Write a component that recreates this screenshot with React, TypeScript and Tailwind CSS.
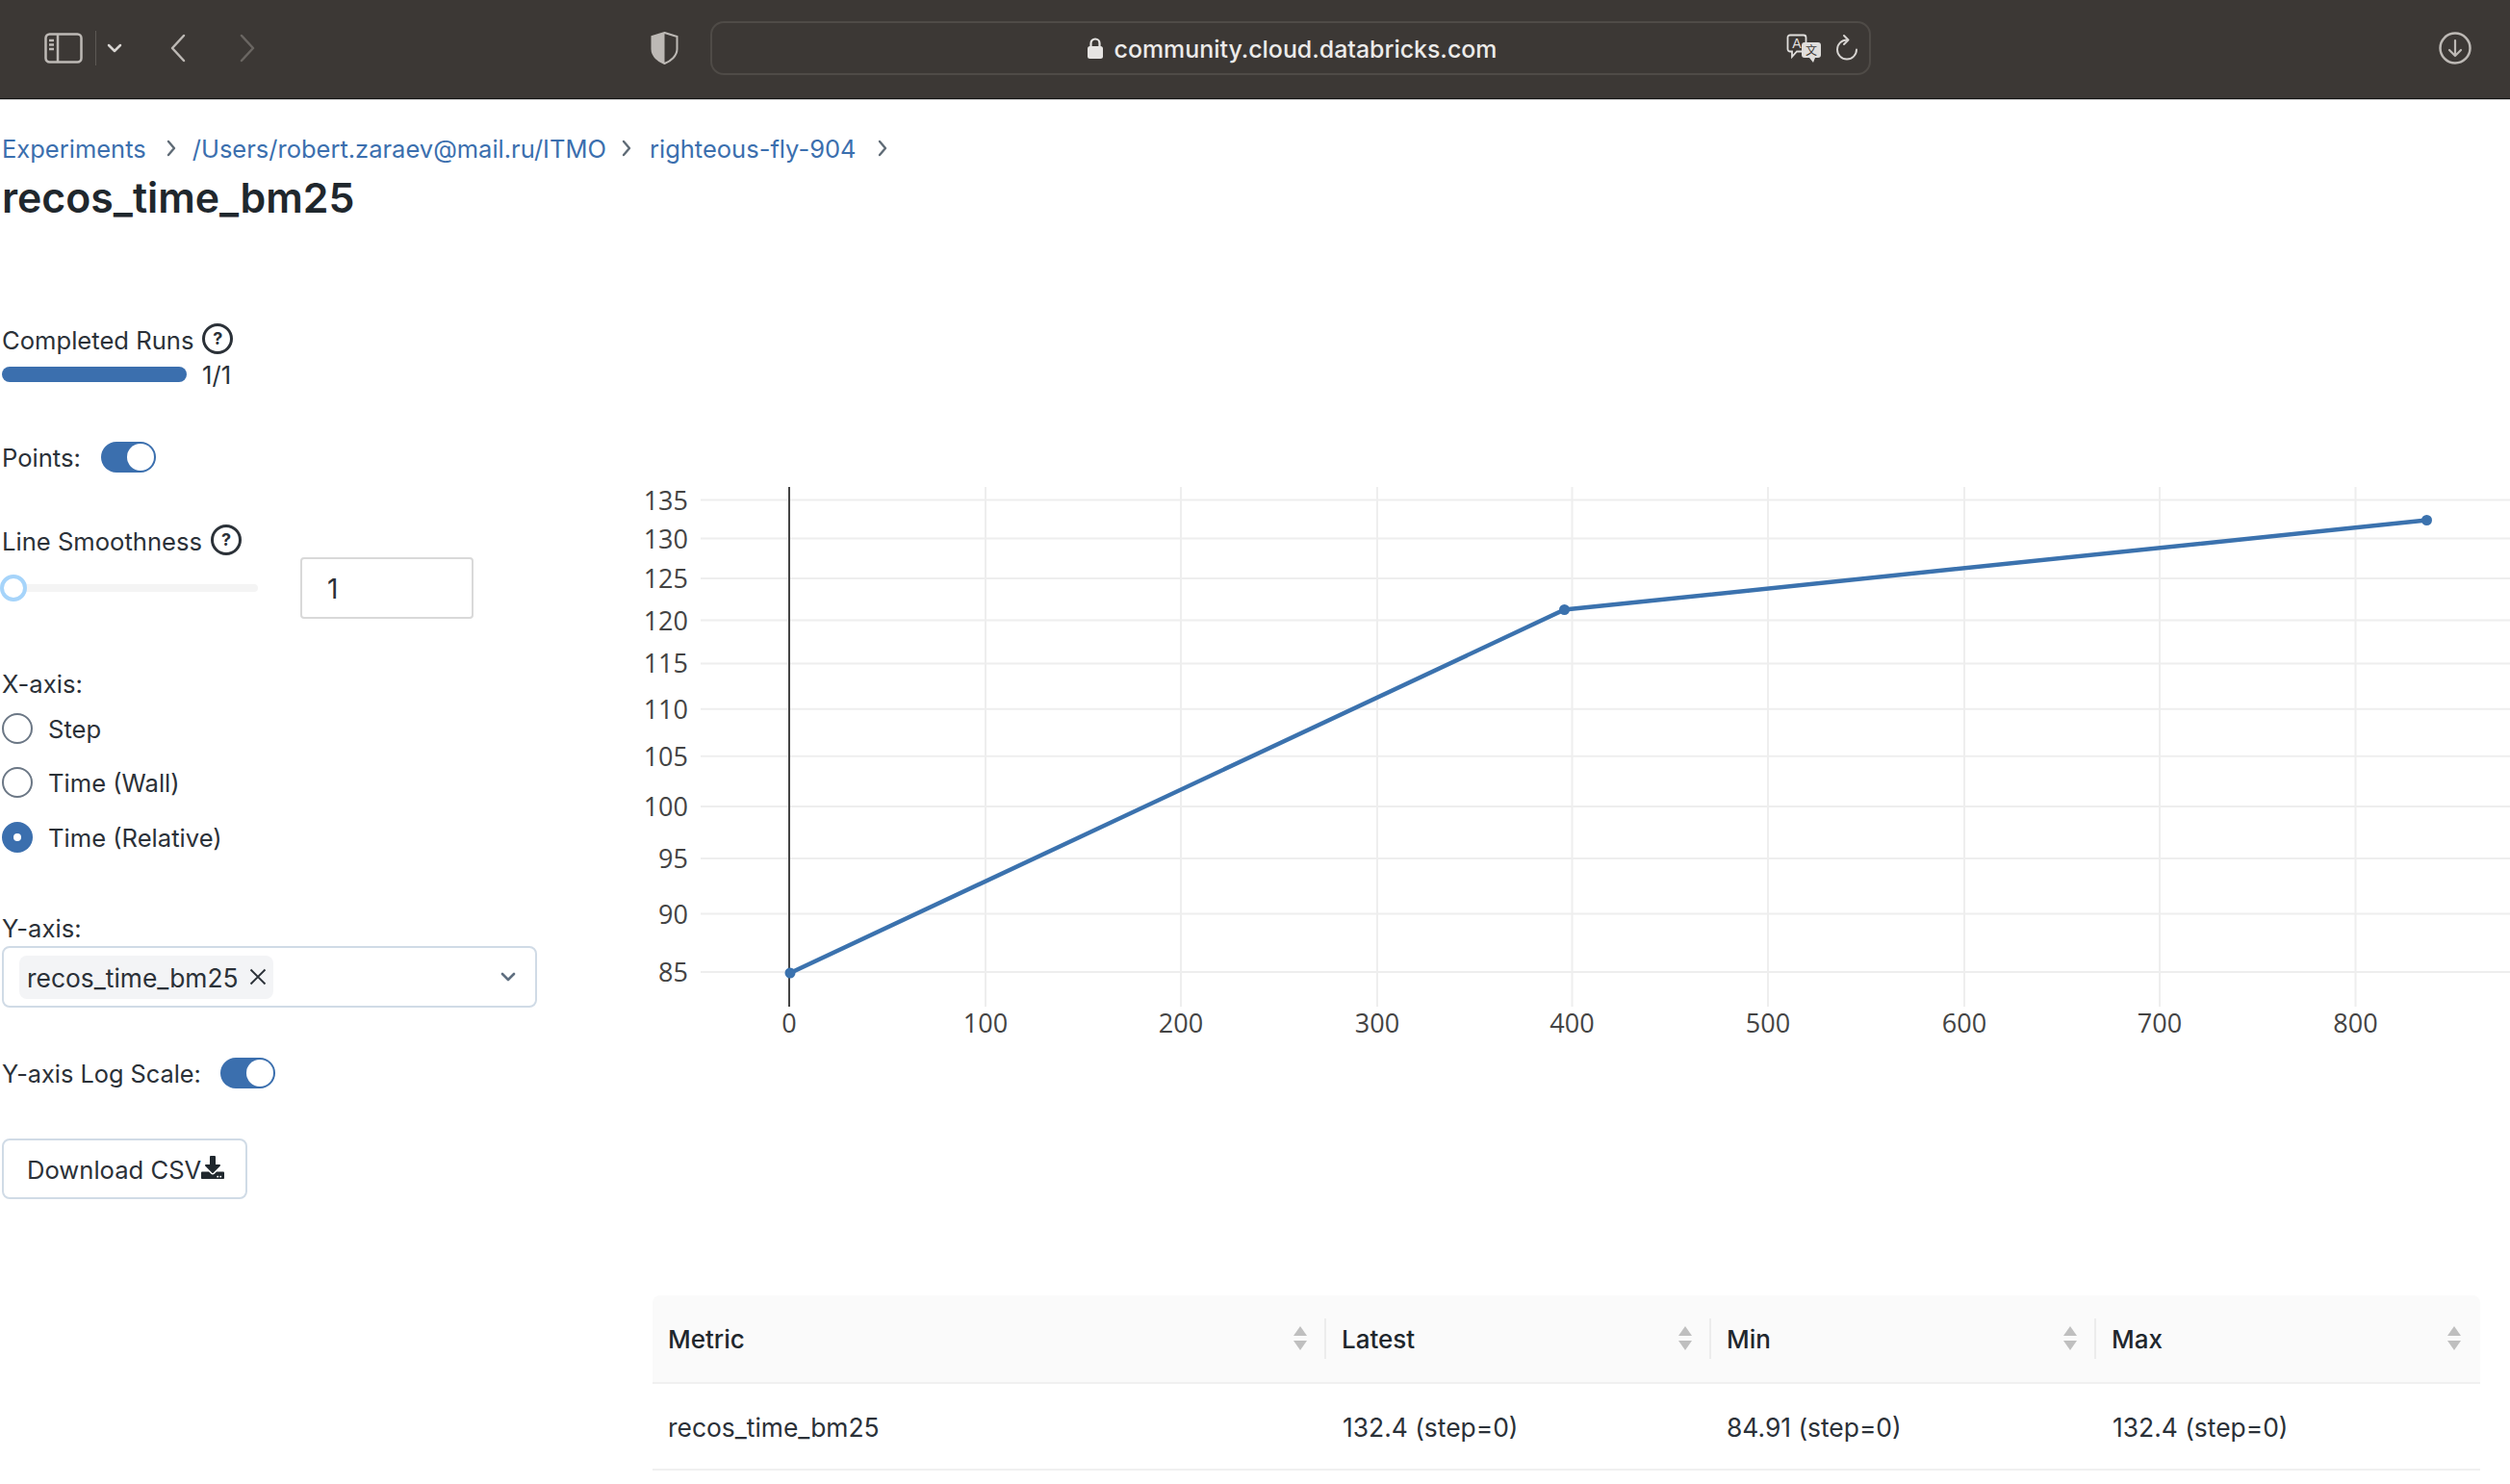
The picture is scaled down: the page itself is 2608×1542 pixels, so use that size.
import React from "react";
import { FaDownload } from "react-icons/fa";

const font = { fontFamily: "Inter, 'Liberation Sans', sans-serif" };
const yTicks: [string, number][] = [["135",519.5],["130",559.6],["125",601],["120",644.6],["115",689.4],["110",736.8],["105",785.8],["100",837.9],["95",892],["90",949.6],["85",1010]];
const xTicks: [string, number][] = [["100",1024],["200",1227],["300",1431],["400",1633.5],["500",1837],["600",2041],["700",2244],["800",2447.5]];
const tickFont = "'Open Sans', sans-serif";

function T({ children, className = "" }: { children: React.ReactNode; className?: string }) {
  return <span className={"pt-[2px] " + className}>{children}</span>;
}
function Help() {
  return <span className="ml-[9px] mt-[-3px] flex h-[32px] w-[32px] items-center justify-center rounded-full border-[3px] border-[#2b3138] text-[18px] font-bold leading-none text-[#2b3138]">?</span>;
}
function Switch() {
  return (
    <span className="flex h-[32px] w-[57px] items-center justify-end rounded-full bg-[#3b6fae] pr-[2px]">
      <span className="h-[28px] w-[28px] rounded-full bg-white" />
    </span>
  );
}
function Radio({ on, label, className }: { on?: boolean; label: string; className: string }) {
  return (
    <div className={"flex h-[32px] items-center " + className}>
      {on ? (
        <span className="flex h-[32px] w-[32px] items-center justify-center rounded-full bg-[#3b6fae]"><span className="h-[8px] w-[8px] rounded-full bg-white" /></span>
      ) : (
        <span className="h-[32px] w-[32px] rounded-full border-2 border-[#6b7785] bg-white" />
      )}
      <T className="ml-[16px]">{label}</T>
    </div>
  );
}
function Sort() {
  return (
    <svg width="16" height="26" viewBox="0 0 16 26" className="shrink-0">
      <path d="M8 0 L15 10 H1 Z" fill="#bfbfbf" />
      <path d="M1 15 H15 L8 25 Z" fill="#bfbfbf" />
    </svg>
  );
}
function HeadCell({ label, className, last }: { label: string; className: string; last?: boolean }) {
  return (
    <div className={"relative flex h-full items-center justify-between pl-[16px] pr-[19px] font-medium " + className}>
      <T>{label}</T>
      <Sort />
      {!last && <span className="absolute right-0 top-[24px] h-[42px] w-[2px] bg-[#ececec]" />}
    </div>
  );
}
function Chevron({ className }: { className: string }) {
  return (
    <svg width="10" height="18" viewBox="0 0 10 18" className={className} fill="none" stroke="#5f6b76" strokeWidth="2.4" strokeLinecap="round" strokeLinejoin="round">
      <path d="M2 2L8 9L2 16" />
    </svg>
  );
}

export default function App() {
  return (
    <div className="min-h-[1542px] w-[2608px] overflow-hidden bg-white text-[25.6px] leading-[32px] text-[#2b3138]" style={font}>
      <div className="flex h-[104px] items-center border-b-[1px] border-[#c9c9c9] bg-[#3c3835] pb-[4px] shadow-[inset_0_-1px_0_#111]">
        <svg width="40" height="32" viewBox="0 0 40 32" className="ml-[46px]" fill="none" stroke="#bdb9b5" strokeWidth="2.5">
          <rect x="1.5" y="1.5" width="37" height="29" rx="4" />
          <path d="M14 2V30" />
          <path d="M5 8H10M5 12.5H10M5 17H10" />
        </svg>
        <span className="ml-[13px] h-[36px] w-[1px] bg-[#5c5854]" />
        <svg width="16" height="12" viewBox="0 0 16 12" className="ml-[11px]" fill="none" stroke="#d8d5d2" strokeWidth="2.5" strokeLinecap="round" strokeLinejoin="round">
          <path d="M2 3L8 9L14 3" />
        </svg>
        <svg width="18" height="30" viewBox="0 0 18 30" className="ml-[49px]" fill="none" stroke="#bdb9b5" strokeWidth="2.5" strokeLinecap="round" strokeLinejoin="round">
          <path d="M15 2L3 15L15 28" />
        </svg>
        <svg width="18" height="30" viewBox="0 0 18 30" className="ml-[54px]" fill="none" stroke="#6a6662" strokeWidth="2.5" strokeLinecap="round" strokeLinejoin="round">
          <path d="M3 2L15 15L3 28" />
        </svg>
        <svg width="29" height="34" viewBox="0 0 29 34" className="ml-[410px]">
          <path d="M14.5 1 L27.5 5 V18 C27.5 25 21 30.5 14.5 33 C8 30.5 1.5 25 1.5 18 V5 Z" fill="none" stroke="#bdb9b5" strokeWidth="2" />
          <path d="M14.5 1 L1.5 5 V18 C1.5 25 8 30.5 14.5 33 Z" fill="#bdb9b5" />
        </svg>
        <div className="relative ml-[33px] flex h-[56px] w-[1206px] items-center justify-center rounded-[14px] border-2 border-[#4f4b47] pl-[2px]">
          <svg width="18" height="24" viewBox="0 0 18 24" className="mr-[11px]">
            <path d="M4.5 11V7a4.5 4.5 0 0 1 9 0v4" fill="none" stroke="#e6e4e2" strokeWidth="2.2" />
            <rect x="1" y="10" width="16" height="13" rx="2.5" fill="#e6e4e2" />
          </svg>
          <span className="pt-[2px] text-[24.9px] font-medium text-[#ecebea]">community.cloud.databricks.com</span>
          <svg width="38" height="30" viewBox="0 0 38 30" className="absolute right-[48px] top-[11px]">
            <path d="M4 1.5H18a2.5 2.5 0 0 1 2.5 2.5V16a2.5 2.5 0 0 1-2.5 2.5H11L6 24V18.5H4A2.5 2.5 0 0 1 1.5 16V4A2.5 2.5 0 0 1 4 1.5Z" fill="#3c3835" stroke="#e0dedc" strokeWidth="1.8" />
            <text x="11" y="15" textAnchor="middle" fontSize="14" fill="#e0dedc" fontFamily="'Liberation Sans', sans-serif">A</text>
            <path d="M19 9H33a3 3 0 0 1 3 3V22a3 3 0 0 1-3 3H30L28 30L24 25H19a3 3 0 0 1-3-3V12a3 3 0 0 1 3-3Z" fill="#e0dedc" />
            <text x="26" y="22" textAnchor="middle" fontSize="12" fill="#3c3835" fontFamily="'Noto Sans CJK SC', sans-serif">文</text>
          </svg>
          <svg width="24" height="28" viewBox="0 0 24 28" className="absolute right-[11px] top-[12px]" fill="none" stroke="#d8d5d2" strokeWidth="1.9" strokeLinecap="round" strokeLinejoin="round">
            <path d="M12 5.5A10 10 0 1 0 22 15.5" />
            <path d="M9 1L13.5 5.5L9 10" />
          </svg>
        </div>
        <svg width="34" height="34" viewBox="0 0 34 34" className="ml-[590px]" fill="none" stroke="#bdb9b5" strokeLinecap="round" strokeLinejoin="round">
          <circle cx="17" cy="17" r="15.5" strokeWidth="2.5" />
          <path d="M17 9V25M11 19L17 25L23 19" strokeWidth="2.2" />
        </svg>
      </div>

      <div className="mt-[30px] flex h-[40px] items-center pl-[2px] text-[25.5px] text-[#3b6fae]">
        <T>Experiments</T>
        <Chevron className="ml-[21px]" />
        <T className="ml-[17px]">/Users/robert.zaraev@mail.ru/ITMO</T>
        <Chevron className="ml-[16px]" />
        <T className="ml-[19px]">righteous-fly-904</T>
        <Chevron className="ml-[22px]" />
      </div>
      <h1 className="mt-[6px] h-[52px] pl-[2px] text-[42.8px] font-semibold leading-[52px] text-[#1f272d]">recos_time_bm25</h1>

      <div className="flex">
        <div className="w-[660px] shrink-0 pl-[2px]">
          <div className="mt-[105px] flex h-[32px] items-center"><T>Completed Runs</T><Help /></div>
          <div className="mt-[8px] flex h-[24px] items-center">
            <span className="h-[16px] w-[192px] rounded-full bg-[#3b6fae]" />
            <T className="ml-[16px]">1/1</T>
          </div>
          <div className="mt-[58px] flex h-[32px] items-center"><T>Points:</T><span className="ml-[21px]"><Switch /></span></div>
          <div className="mt-[55px] flex h-[32px] items-center"><T>Line Smoothness</T><Help /></div>
          <div className="mt-[1px] flex h-[64px] items-center">
            <div className="relative h-[8px] w-[266px] rounded-full bg-[#f4f4f4]">
              <span className="absolute left-[-2px] top-[-10px] h-[28px] w-[28px] rounded-full border-4 border-[#a6d4fa] bg-white" />
            </div>
            <div className="ml-[44px] flex h-[64px] w-[180px] items-center rounded-[4px] border-2 border-[#d9d9d9] pl-[26px] text-[28px]"><T>1</T></div>
          </div>
          <div className="mt-[51px] flex h-[32px] items-center"><T>X-axis:</T></div>
          <Radio label="Step" className="mt-[15px]" />
          <Radio label="Time (Wall)" className="mt-[24px]" />
          <Radio on label="Time (Relative)" className="mt-[25px]" />
          <div className="mt-[62px] flex h-[32px] items-center"><T>Y-axis:</T></div>
          <div className="mt-[3px] flex h-[64px] w-[556px] items-center justify-between rounded-[8px] border-2 border-[#d0dbe6] pl-[16px] pr-[20px]">
            <div className="flex h-[45px] w-[264px] items-center rounded-[8px] bg-[#f3f4f6] pl-[8px]">
              <T className="text-[26.4px]">recos_time_bm25</T>
              <svg width="18" height="18" viewBox="0 0 18 18" className="ml-[11px]" fill="none" stroke="#2b3138" strokeWidth="1.9"><path d="M1.5 1.5L16.5 16.5M16.5 1.5L1.5 16.5" /></svg>
            </div>
            <svg width="16" height="10" viewBox="0 0 16 10" fill="none" stroke="#5f6f80" strokeWidth="2.6" strokeLinecap="round" strokeLinejoin="round"><path d="M2 2L8 8L14 2" /></svg>
          </div>
          <div className="mt-[52px] flex h-[32px] items-center"><T className="text-[25.3px]">Y-axis Log Scale:</T><span className="ml-[20px]"><Switch /></span></div>
          <div className="mt-[52px] flex h-[63px] w-[255px] items-center rounded-[8px] border-2 border-[#d0dbe6] pl-[24px]">
            <T>Download CSV</T>
            <FaDownload className="mt-[-4px] text-[24px] text-[#1f272d]" />
          </div>
        </div>

        <div className="w-[1948px] shrink-0">
          <svg width="1948" height="600" viewBox="660 490 1948 600" className="mt-[258px] block">
            {yTicks.map(([t, y]) => <line key={t} x1="728" x2="2608" y1={y} y2={y} stroke="#eeeeee" strokeWidth="2" />)}
            {xTicks.map(([t, x]) => <line key={t} x1={x} x2={x} y1="506" y2="1046" stroke="#eeeeee" strokeWidth="2" />)}
            <line x1="820" x2="820" y1="506" y2="1046" stroke="#444444" strokeWidth="2" />
            <polyline points="821,1011 1625.5,633.5 2521.5,540.5" fill="none" stroke="#3b72ae" strokeWidth="4.5" />
            <circle cx="821" cy="1011" r="5.5" fill="#3b72ae" />
            <circle cx="1625.5" cy="633.5" r="5.5" fill="#3b72ae" />
            <circle cx="2521.5" cy="540.5" r="5.5" fill="#3b72ae" />
            {yTicks.map(([t, y]) => <text key={t} x="715" y={y + 10} textAnchor="end" fontSize="27" fill="#444444" fontFamily={tickFont}>{t}</text>)}
            <text x="820" y="1073" textAnchor="middle" fontSize="27" fill="#444444" fontFamily={tickFont}>0</text>
            {xTicks.map(([t, x]) => <text key={t} x={x} y="1073" textAnchor="middle" fontSize="27" fill="#444444" fontFamily={tickFont}>{t}</text>)}
          </svg>

          <div className="ml-[18px] mt-[256px] w-[1899px]">
            <div className="flex h-[92px] items-center rounded-t-[8px] border-b-2 border-[#f0f0f0] bg-[#fafafa] text-[26px] text-[#1f272d]">
              <HeadCell label="Metric" className="w-[700px]" />
              <HeadCell label="Latest" className="w-[400px]" />
              <HeadCell label="Min" className="w-[400px]" />
              <HeadCell label="Max" className="w-[399px]" last />
            </div>
            <div className="flex h-[90px] items-center border-b-2 border-[#f0f0f0] text-[26.4px]">
              <T className="w-[700px] pl-[16px]">recos_time_bm25</T>
              <T className="w-[400px] pl-[17px]">132.4 (step=0)</T>
              <T className="w-[400px] pl-[16px]">84.91 (step=0)</T>
              <T className="w-[399px] pl-[17px]">132.4 (step=0)</T>
            </div>
          </div>
        </div>
      </div>
    </div>
  );
}
